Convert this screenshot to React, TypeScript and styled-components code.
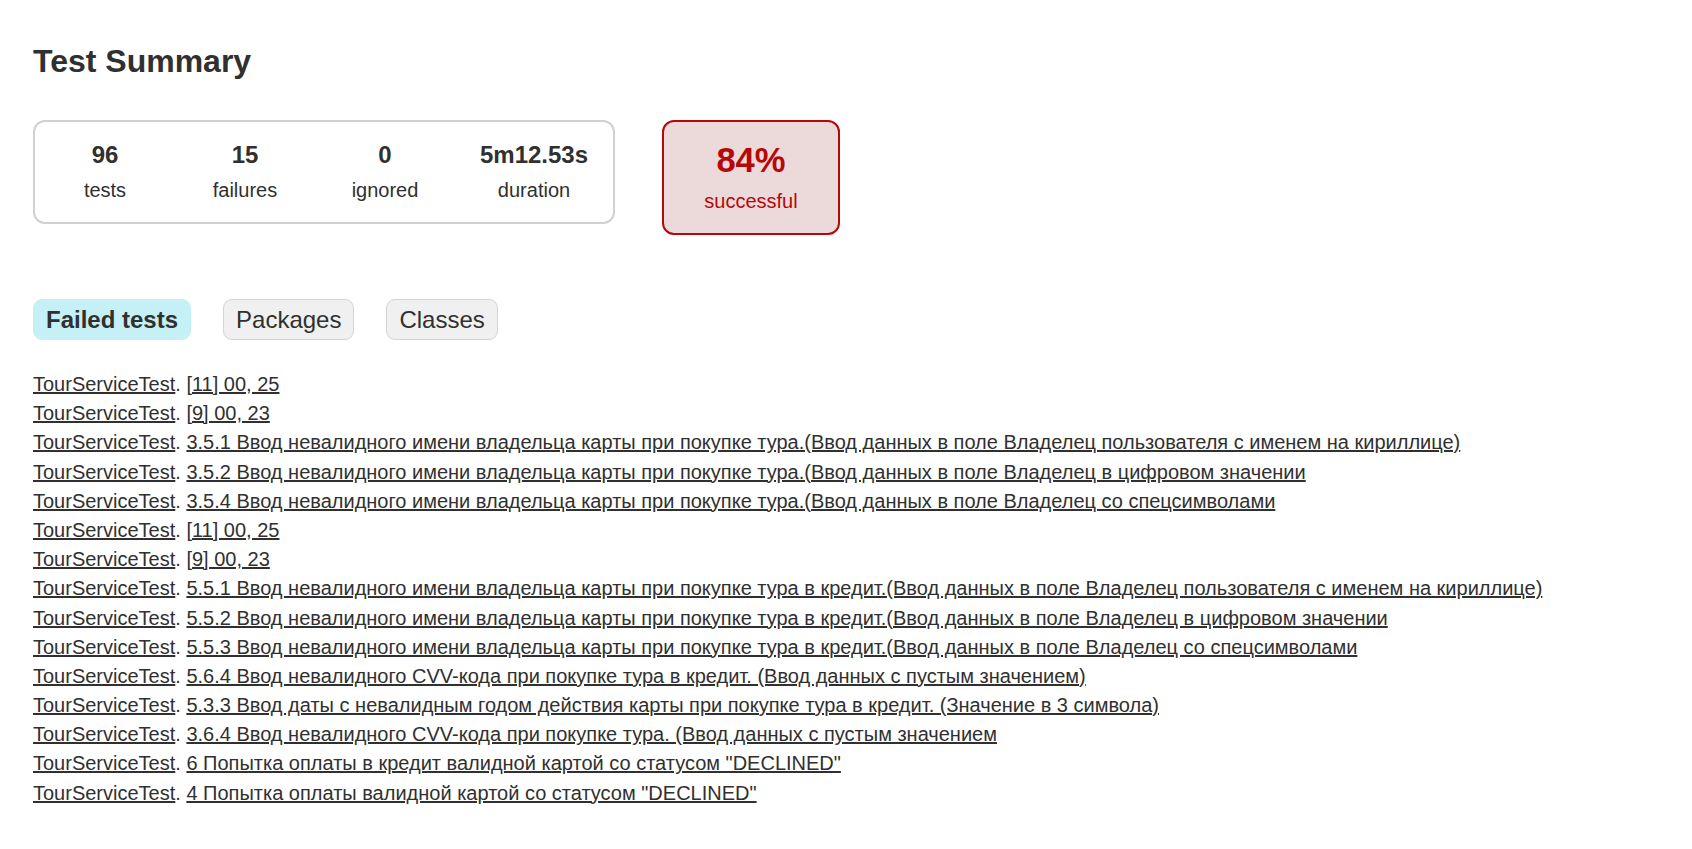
import React from "react";
import styled, { createGlobalStyle } from "styled-components";

const GlobalStyle = createGlobalStyle`
  html, body {
    margin: 0;
    padding: 0;
    background: #ffffff;
  }
  body {
    font-family: "Liberation Sans", Arial, sans-serif;
    font-size: 20px;
    color: #303030;
  }
`;

const Page = styled.div`
  padding: 0 40px 60px 33px;
`;

const Title = styled.h1`
  margin: 43px 0 0;
  font-size: 32px;
  font-weight: bold;
  line-height: normal;
  color: #303030;
`;

const SummaryRow = styled.div`
  display: flex;
  align-items: flex-start;
  gap: 47px;
  margin-top: 40px;
`;

const SummaryGroup = styled.div`
  display: flex;
  border: 2px solid #d0d0d0;
  border-radius: 12px;
`;

const InfoBox = styled.div<{ $w: number }>`
  width: ${(p) => p.$w}px;
  padding: 19px 0 20px;
  text-align: center;
`;

const Counter = styled.div`
  font-size: 24px;
  font-weight: bold;
  line-height: normal;
  margin-bottom: 10px;
`;

const Label = styled.div`
  font-size: 20px;
  line-height: normal;
`;

const SuccessRate = styled.div`
  width: 174px;
  padding: 19px 0 20px;
  text-align: center;
  border: 2px solid #b60808;
  border-radius: 12px;
  background: #ecdada;
  color: #b60808;
`;

const Percent = styled.div`
  font-size: 34.6px;
  font-weight: bold;
  line-height: normal;
  margin-bottom: 10px;
`;

const SuccessLabel = styled.div`
  font-size: 20px;
  line-height: normal;
`;

const Tabs = styled.ul`
  display: flex;
  gap: 32px;
  margin: 64px 0 0;
  padding: 0;
  list-style: none;
`;

const Tab = styled.li<{ $selected?: boolean }>`
  padding: 6px 12px;
  border: 1px solid ${(p) => (p.$selected ? "#c5f0f5" : "#d4d4d4")};
  background: ${(p) => (p.$selected ? "#c5f0f5" : "#f0f0f0")};
  border-radius: 9px;
  font-size: 24px;
  line-height: 27px;
  font-weight: ${(p) => (p.$selected ? "bold" : "normal")};
  color: #303030;
`;

const LinkList = styled.ul`
  margin: 33px 0 0;
  padding: 0;
  list-style: none;
`;

const Item = styled.li`
  font-size: 20px;
  line-height: 23px;
  margin-bottom: 6.2px;
  white-space: nowrap;
`;

const Link = styled.a`
  color: #303030;
  text-decoration: underline;
  cursor: pointer;
`;

const failed = [
  "[11] 00, 25",
  "[9] 00, 23",
  "3.5.1 Ввод невалидного имени владельца карты при покупке тура.(Ввод данных в поле Владелец пользователя с именем на кириллице)",
  "3.5.2 Ввод невалидного имени владельца карты при покупке тура.(Ввод данных в поле Владелец в цифровом значении",
  "3.5.4 Ввод невалидного имени владельца карты при покупке тура.(Ввод данных в поле Владелец со спецсимволами",
  "[11] 00, 25",
  "[9] 00, 23",
  "5.5.1 Ввод невалидного имени владельца карты при покупке тура в кредит.(Ввод данных в поле Владелец пользователя с именем на кириллице)",
  "5.5.2 Ввод невалидного имени владельца карты при покупке тура в кредит.(Ввод данных в поле Владелец в цифровом значении",
  "5.5.3 Ввод невалидного имени владельца карты при покупке тура в кредит.(Ввод данных в поле Владелец со спецсимволами",
  "5.6.4 Ввод невалидного CVV-кода при покупке тура в кредит. (Ввод данных с пустым значением)",
  "5.3.3 Ввод даты с невалидным годом действия карты при покупке тура в кредит. (Значение в 3 символа)",
  "3.6.4 Ввод невалидного CVV-кода при покупке тура. (Ввод данных с пустым значением",
  '6 Попытка оплаты в кредит валидной картой со статусом "DECLINED"',
  '4 Попытка оплаты валидной картой со статусом "DECLINED"',
];

const stats = [
  { value: "96", label: "tests", w: 140 },
  { value: "15", label: "failures", w: 140 },
  { value: "0", label: "ignored", w: 140 },
  { value: "5m12.53s", label: "duration", w: 158 },
];

export default function App() {
  return (
    <>
      <GlobalStyle />
      <Page>
        <Title>Test Summary</Title>
        <SummaryRow>
          <SummaryGroup>
            {stats.map((s) => (
              <InfoBox key={s.label} $w={s.w}>
                <Counter>{s.value}</Counter>
                <Label>{s.label}</Label>
              </InfoBox>
            ))}
          </SummaryGroup>
          <SuccessRate>
            <Percent>84%</Percent>
            <SuccessLabel>successful</SuccessLabel>
          </SuccessRate>
        </SummaryRow>
        <Tabs>
          <Tab $selected>Failed tests</Tab>
          <Tab>Packages</Tab>
          <Tab>Classes</Tab>
        </Tabs>
        <LinkList>
          {failed.map((name, i) => (
            <Item key={i}>
              <Link>TourServiceTest</Link>. <Link>{name}</Link>
            </Item>
          ))}
        </LinkList>
      </Page>
    </>
  );
}
